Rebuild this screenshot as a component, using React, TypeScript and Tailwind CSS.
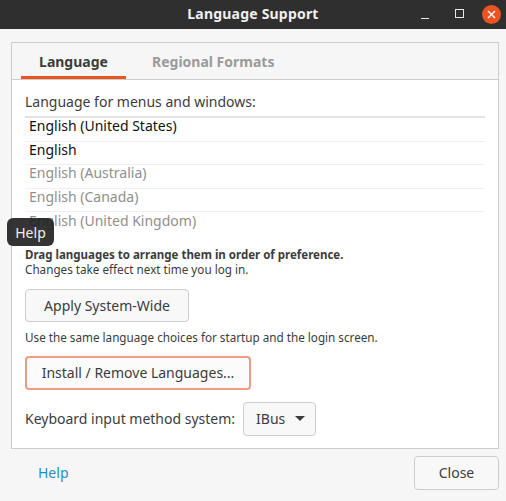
const languages = [
  { name: "English (United States)", active: true },
  { name: "English", active: true },
  { name: "English (Australia)", active: false },
  { name: "English (Canada)", active: false },
  { name: "English (United Kingdom)", active: false },
];

function TitleBar() {
  return (
    <div className="relative flex h-[29px] items-center justify-center bg-[#2f2f2f] text-[#f0f0f0]">
      <span className="pb-[2px] text-[14px] font-bold tracking-[0.2px]">Language Support</span>
      <div className="absolute right-[5px] top-0 flex h-full items-center">
        <div className="mr-[26px] mt-[8px] h-[1.5px] w-[8px] bg-[#e8e8e8]" />
        <div className="mr-[18px] mb-[2px] h-[9px] w-[9px] border-[1.5px] border-[#e8e8e8]" />
        <div className="flex h-[19px] w-[19px] items-center justify-center rounded-full bg-[#e95420]">
          <svg width="9" height="9" viewBox="0 0 9 9">
            <path d="M1 1 L8 8 M8 1 L1 8" stroke="#ffffff" strokeWidth="1.4" />
          </svg>
        </div>
      </div>
    </div>
  );
}

function Tabs() {
  return (
    <div className="flex h-[37px] items-end border-b border-[#cdcdcd] bg-[#f6f6f6] pl-[9px]">
      <div className="flex h-full w-[105px] items-center justify-center border-b-[3px] border-[#e95420] pt-[3px] text-[14px] font-bold text-[#3c3c3c]">
        Language
      </div>
      <div className="flex h-full items-center pl-[26px] text-[14px] font-bold text-[#9a9a9a]">
        Regional Formats
      </div>
    </div>
  );
}

export default function App() {
  return (
    <div
      className="relative h-[501px] w-[506px] overflow-hidden bg-[#f6f6f6] text-[#3c3c3c]"
      style={{ fontFamily: '"Noto Sans", "Open Sans", sans-serif' }}
    >
      <TitleBar />
      <div className="pl-[11px] pr-[7px] pt-[13px]">
        <div className="border border-[#cdcdcd]">
          <Tabs />
          <div className="bg-white pb-[12px] pl-[13px] pr-[13px] pt-[12px]">
            <div className="text-[14px] leading-[19px] text-[#3c3c3c]">Language for menus and windows:</div>
            <div className="mt-[5px] border-t-2 border-[#e3e3e3]">
              {languages.map((l, i) => (
                <div
                  key={l.name}
                  className={
                    "flex h-[23.6px] items-center pb-[7px] pl-[4px] text-[14px] " +
                    (i < languages.length - 1 ? "border-b border-[#efefef] " : "") +
                    (l.active ? "text-[#111111]" : "text-[#8f8f8f]")
                  }
                >
                  {l.name}
                </div>
              ))}
            </div>
            <div className="mt-[11px] text-[11.5px] font-bold leading-[15px] text-[#3c3c3c]">
              Drag languages to arrange them in order of preference.
            </div>
            <div className="text-[11.7px] leading-[15px] text-[#3c3c3c]">Changes take effect next time you log in.</div>
            <button className="mt-[12px] flex h-[33px] w-[164px] items-center justify-center rounded-[4px] border border-[#cdcdcd] bg-[#f8f8f8] text-[14px] text-[#3c3c3c]">
              Apply System-Wide
            </button>
            <div className="mt-[8px] text-[11.7px] leading-[15px] text-[#3c3c3c]">
              Use the same language choices for startup and the login screen.
            </div>
            <button className="mt-[11px] flex h-[34px] w-[226px] items-center justify-center rounded-[4px] border-2 border-[#ef9d80] bg-[#fbfbfb] text-[14px] text-[#3c3c3c]">
              Install / Remove Languages...
            </button>
            <div className="mt-[12px] flex items-center">
              <span className="text-[14px] text-[#3c3c3c]">Keyboard input method system:</span>
              <button className="ml-[8px] flex h-[34px] w-[73px] items-center justify-between rounded-[4px] border border-[#cdcdcd] bg-[#f8f8f8] pl-[12px] pr-[10px] text-[14px] text-[#3c3c3c]">
                <span>IBus</span>
                <svg width="10" height="6" viewBox="0 0 10 6">
                  <path d="M0 0 L10 0 L5 5 Z" fill="#3c3c3c" />
                </svg>
              </button>
            </div>
          </div>
        </div>
        <div className="mt-[7px] flex items-center justify-between">
          <span className="pl-[27px] text-[14px] text-[#1a8fd0]">Help</span>
          <button className="flex h-[34px] w-[85px] items-center justify-center rounded-[4px] border border-[#cdcdcd] bg-[#f8f8f8] text-[14px] text-[#3c3c3c]">
            Close
          </button>
        </div>
      </div>
      <div className="absolute left-[7px] top-[218px] flex h-[28px] w-[47px] items-center justify-center rounded-[6px] bg-[#1e1e1e]/90 pt-[1px] text-[14px] text-[#f0f0f0]">
        Help
      </div>
    </div>
  );
}
